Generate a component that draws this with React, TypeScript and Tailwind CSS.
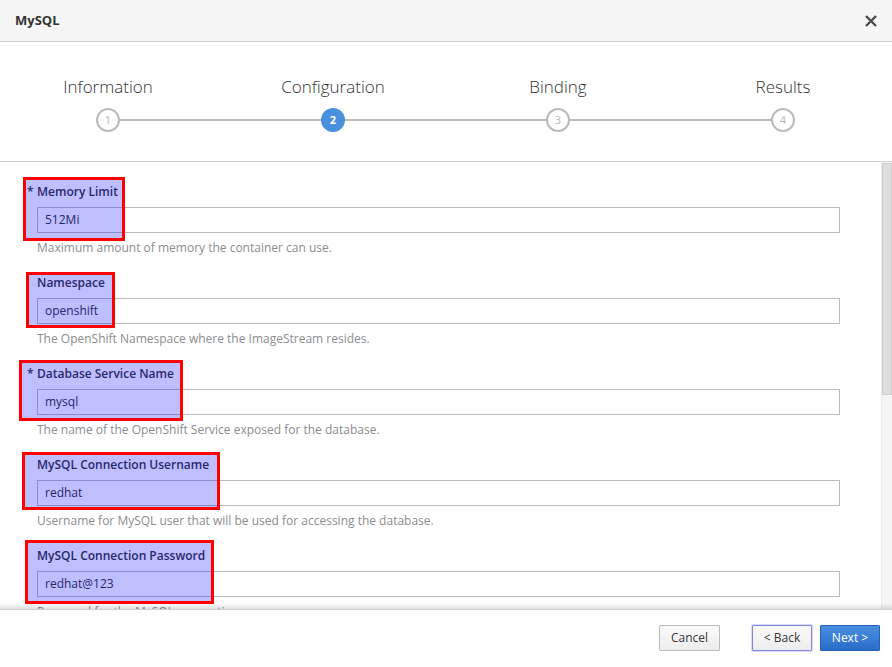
import React from "react";

const steps = [
  { n: 1, label: "Information" },
  { n: 2, label: "Configuration", active: true },
  { n: 3, label: "Binding" },
  { n: 4, label: "Results" },
];

const fields = [
  {
    label: "Memory Limit",
    required: true,
    value: "512Mi",
    help: "Maximum amount of memory the container can use.",
    mark: "left-[23px] top-[-5px] w-[102px] h-[64px]",
  },
  {
    label: "Namespace",
    value: "openshift",
    help: "The OpenShift Namespace where the ImageStream resides.",
    mark: "left-[26px] top-[-1px] w-[89px] h-[56px]",
  },
  {
    label: "Database Service Name",
    required: true,
    value: "mysql",
    help: "The name of the OpenShift Service exposed for the database.",
    mark: "left-[19px] top-[-4px] w-[164px] h-[61px]",
  },
  {
    label: "MySQL Connection Username",
    value: "redhat",
    help: "Username for MySQL user that will be used for accessing the database.",
    mark: "left-[22px] top-[-3px] w-[198px] h-[58px]",
  },
  {
    label: "MySQL Connection Password",
    value: "redhat@123",
    help: "Password for the MySQL connection user.",
    mark: "left-[25px] top-[-6px] w-[189px] h-[64px]",
  },
];

function StepCircle({ n, active }: { n: number; active?: boolean }) {
  if (active) {
    return (
      <div className="relative w-[24px] h-[24px] rounded-full bg-[#4a90dc] flex items-center justify-center text-white text-[11px] font-bold">
        {n}
      </div>
    );
  }
  return (
    <div className="relative w-[24px] h-[24px] rounded-full bg-white border-2 border-[#bbbbbb] flex items-center justify-center text-[#b5b5b5] text-[11px]">
      {n}
    </div>
  );
}

export default function App() {
  return (
    <div className="w-[892px] h-[667px] flex flex-col bg-white overflow-hidden font-['Open_Sans',sans-serif] text-[#363636]">
      {/* header */}
      <div className="h-[42px] shrink-0 bg-[#f5f5f5] border-b border-[#d1d1d1] flex items-center justify-between pl-[15px] pr-[14px]">
        <span className="text-[13px] font-bold text-[#333]">MySQL</span>
        <svg width="14" height="14" viewBox="0 0 14 14" className="mt-[1px]">
          <path d="M2 2 L12 12 M12 2 L2 12" stroke="#4d4d4d" strokeWidth="2.4" strokeLinecap="butt" />
        </svg>
      </div>

      {/* wizard steps */}
      <div className="h-[120px] shrink-0 border-b border-[#d1d1d1] pt-[34px]">
        <div className="relative flex justify-between pl-[33px] pr-[34px]">
          <div className="absolute left-[108px] right-[109px] top-[43px] h-[2px] bg-[#bbbbbb]" />
          {steps.map((s) => (
            <div key={s.n} className="relative w-[150px] flex flex-col items-center">
              <div className="text-[17px] font-light leading-[22px] text-[#333] mb-[10px]">{s.label}</div>
              <StepCircle n={s.n} active={s.active} />
            </div>
          ))}
        </div>
      </div>

      {/* body */}
      <div className="relative flex-1 flex min-h-0">
        <div className="flex-1 overflow-hidden pt-[21px] pl-[37px] pr-[41px]">
          {fields.map((f) => (
            <div key={f.label} className="relative mb-[18px]">
              <div className="relative text-[12px] font-semibold leading-[18px] text-[#363636] mb-[6px]">
                {f.required && <span className="absolute left-[-10px]">*</span>}
                {f.label}
              </div>
              <div className="h-[26px] border border-[#bbbbbb] bg-white pl-[7px] flex items-center text-[12px] text-[#333]">
                {f.value}
              </div>
              <div className="text-[12px] leading-[17px] text-[#8b8d8f] mt-[6px]">{f.help}</div>
              {f.mark && (
                <div className={`absolute ${f.mark} -translate-x-[37px] -translate-y-[1px] border-[3px] border-[#ff0000] bg-[rgba(0,0,255,0.25)]`} />
              )}
            </div>
          ))}
        </div>
        {/* scrollbar */}
        <div className="w-[11px] shrink-0 bg-[#f5f5f5] border-l border-[#ececec] pt-[1px]">
          <div className="h-[232px] bg-[#dedede] border border-[#cfcfcf]" />
        </div>
        <div className="absolute left-0 right-0 bottom-0 h-[6px] bg-gradient-to-b from-transparent to-[rgba(0,0,0,0.12)]" />
      </div>

      {/* footer */}
      <div className="h-[58px] shrink-0 border-t border-[#d1d1d1] flex items-start justify-end pt-[15px] pr-[12px]">
        <button className="w-[61px] h-[26px] text-[12px] text-[#363636] border border-[#bbbbbb] rounded-[1px] bg-gradient-to-b from-[#fafafa] to-[#ededed]">
          Cancel
        </button>
        <button className="ml-[32px] w-[60px] h-[26px] text-[12px] text-[#363636] border border-[#8585e0] rounded-[1px] bg-gradient-to-b from-[#fafafa] to-[#ededed] shadow-[0_0_0_1px_rgba(150,150,240,0.35)]">
          &lt; Back
        </button>
        <button className="ml-[8px] w-[60px] h-[26px] text-[12px] text-white border border-[#2261b5] rounded-[1px] bg-gradient-to-b from-[#4a8fe0] to-[#2a6cc9]">
          Next &gt;
        </button>
      </div>
    </div>
  );
}
